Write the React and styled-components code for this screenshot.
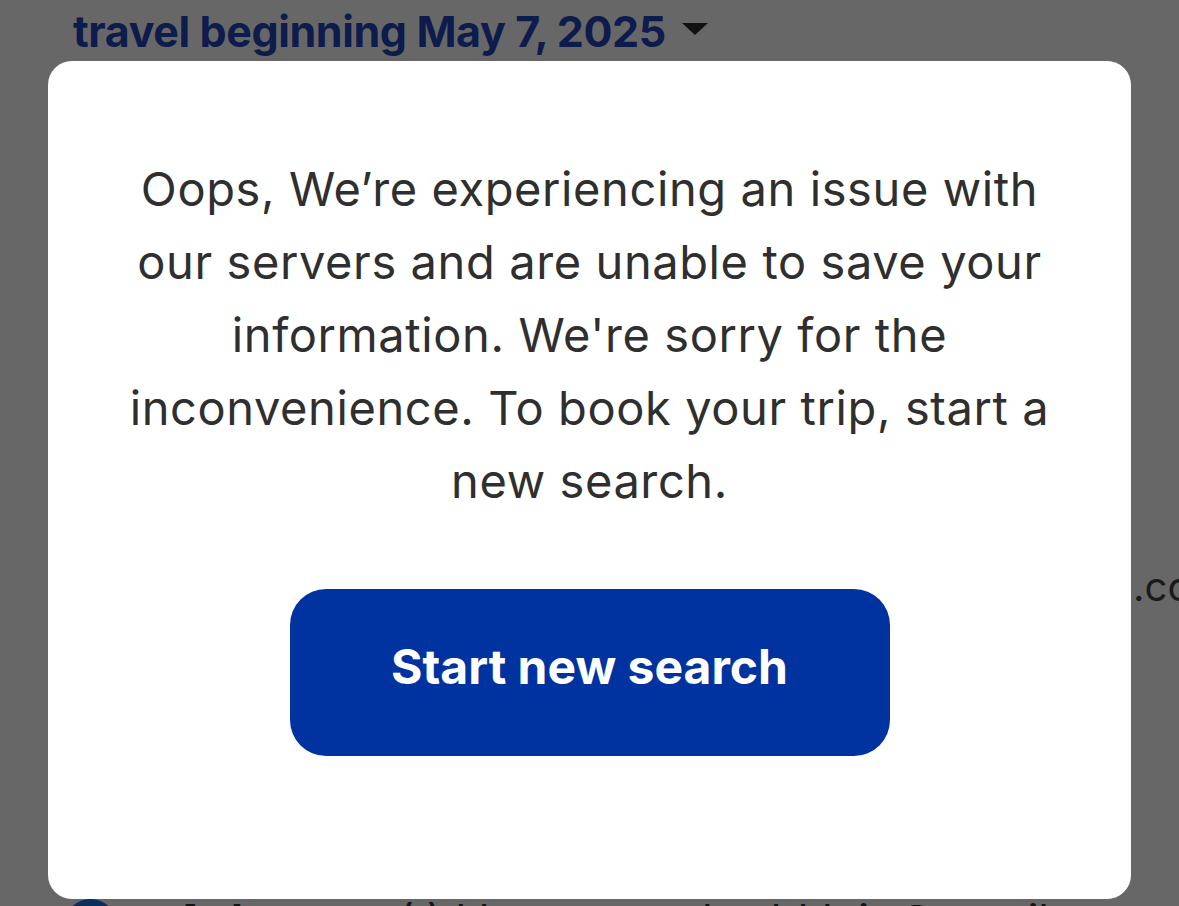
import React from "react";
import styled, { createGlobalStyle } from "styled-components";

const GlobalStyle = createGlobalStyle`
  html, body {
    margin: 0;
    padding: 0;
    background: #676767;
  }
  body {
    font-family: Inter, "Open Sans", "Liberation Sans", sans-serif;
  }
`;

const Page = styled.div`
  position: relative;
  width: 1179px;
  height: 906px;
  overflow: hidden;
  background: #676767;
`;

const Backdrop = styled.div`
  display: flex;
  flex-direction: column;
`;

const TripHeader = styled.div`
  display: flex;
  align-items: center;
  gap: 16px;
  padding: 0 0 0 73px;
  height: 61px;
  font-size: 43px;
  font-weight: 700;
  letter-spacing: -0.4px;
  color: #0d1c4c;
  white-space: nowrap;
`;

const Caret = styled.span`
  width: 0;
  height: 0;
  border-left: 13px solid transparent;
  border-right: 13px solid transparent;
  border-top: 12px solid #111;
  margin-bottom: 4px;
`;

const EmailPeek = styled.div`
  margin: 502px 0 0 1133px;
  font-size: 40px;
  line-height: 48px;
  color: #1a1a1a;
  white-space: nowrap;
`;

const ContactRow = styled.div`
  display: flex;
  align-items: flex-start;
  margin-top: 282px;
  padding-left: 64px;
  font-size: 44px;
  line-height: 54px;
  color: #151515;
  white-space: nowrap;
`;

const Avatar = styled.span`
  flex: none;
  width: 53px;
  height: 53px;
  margin: 6px 57px 0 0;
  border-radius: 50%;
  background: #0b2f5c;
`;

const ContactText = styled.span`
  display: inline-block;
  width: ${(p) => p.w}px;
  margin-right: ${(p) => p.gap}px;
  font-weight: ${(p) => (p.bold ? 700 : 400)};
  overflow: hidden;
`;

const Modal = styled.div`
  position: absolute;
  top: 61px;
  left: 48px;
  width: 1083px;
  height: 838px;
  background: #fff;
  border-radius: 24px;
  display: flex;
  flex-direction: column;
  align-items: center;
  box-sizing: border-box;
  padding-top: 91px;
`;

const Message = styled.p`
  margin: 0;
  text-align: center;
  font-size: 47px;
  line-height: 73px;
  color: #2f2f2f;
  letter-spacing: 0.6px;
  white-space: nowrap;
`;

const PrimaryButton = styled.button`
  margin-top: 72px;
  width: 600px;
  height: 167px;
  padding: 0 0 12px;
  border: none;
  border-radius: 36px;
  background: #0033a0;
  color: #fff;
  font-family: inherit;
  font-size: 48px;
  font-weight: 700;
  letter-spacing: 0;
  cursor: pointer;
`;

export default function App() {
  return (
    <>
      <GlobalStyle />
      <Page>
        <Backdrop>
          <TripHeader>
            travel beginning May 7, 2025
            <Caret />
          </TripHeader>
          <EmailPeek>.com</EmailPeek>
          <ContactRow>
            <Avatar />
            <ContactText bold w={149} gap={75}>Asher</ContactText>
            <ContactText w={121} gap={98}>(·)·l·l</ContactText>
            <ContactText w={20} gap={17}>•</ContactText>
            <ContactText w={490} gap={0}>asherbklein@gmail.com</ContactText>
          </ContactRow>
        </Backdrop>
        <Modal>
          <Message>
            Oops, We’re experiencing an issue with
            <br />
            our servers and are unable to save your
            <br />
            information. We're sorry for the
            <br />
            inconvenience. To book your trip, start a
            <br />
            new search.
          </Message>
          <PrimaryButton>Start new search</PrimaryButton>
        </Modal>
      </Page>
    </>
  );
}
